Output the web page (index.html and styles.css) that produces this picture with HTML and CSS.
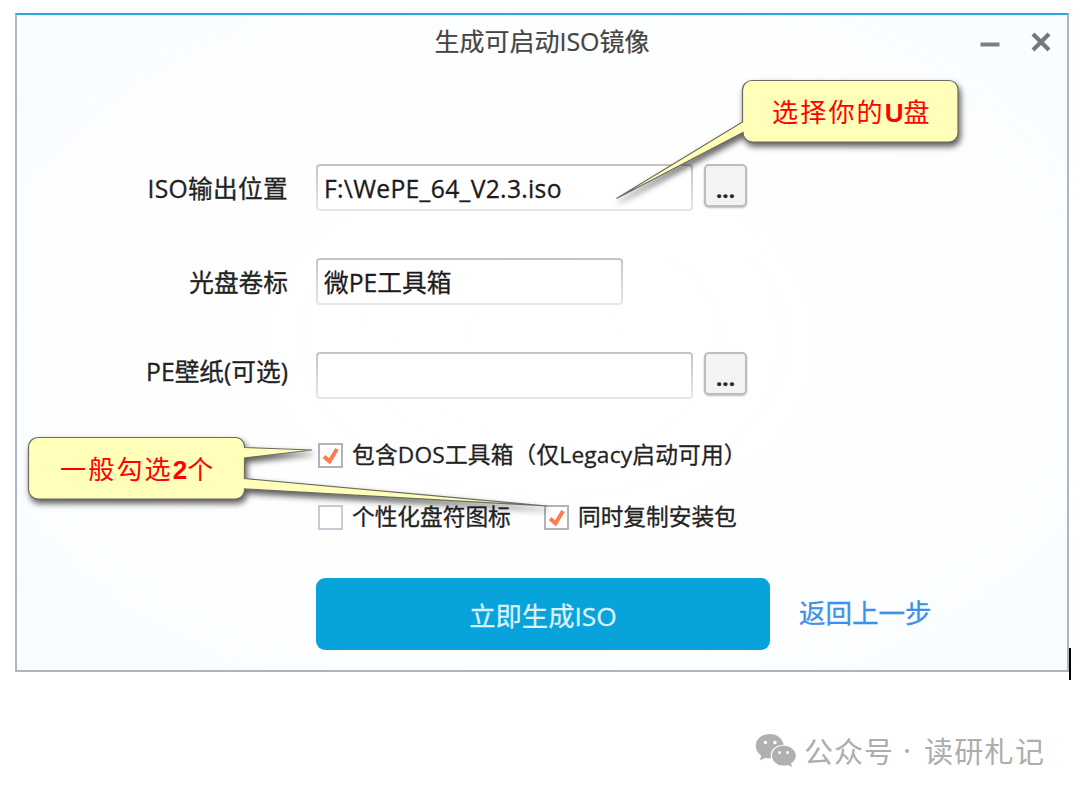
FILE: index.html
```
<!DOCTYPE html>
<html lang="zh-CN">
<head>
  <meta charset="UTF-8" />
  <title>生成可启动ISO镜像</title>
  <link rel="stylesheet" href="styles.css">
</head>
<body>
  <div class="window">
    <header class="titlebar">
      <h1>生成可启动ISO镜像</h1>
      <div class="window-btns">
        <svg width="20" height="22" viewBox="0 0 20 22"><path d="M0.5 13.5h19" stroke="#7e7e7e" stroke-width="4" /></svg>
        <svg width="20" height="22" viewBox="0 0 20 22"><path d="M2 3l16 16M18 3L2 19" stroke="#787878" stroke-width="4.2" /></svg>
      </div>
    </header>

    <form class="iso-form">
      <div class="row">
        <label class="name output-name" for="output">ISO输出位置</label>
        <input class="field wide output" id="output" type="text" value="F:\WePE_64_V2.3.iso" />
        <button class="browse" type="button">...</button>
      </div>
      <div class="row">
        <label class="name" for="volume">光盘卷标</label>
        <input class="field volume" id="volume" type="text" value="微PE工具箱" />
      </div>
      <div class="row wallpaper-row">
        <label class="name" for="wallpaper">PE壁纸(可选)</label>
        <input class="field wide" id="wallpaper" type="text" />
        <button class="browse" type="button">...</button>
      </div>

      <div class="options">
        <div class="option-row">
          <div class="option">
            <span class="box checked"><svg width="18" height="18" viewBox="0 0 18 18"><path d="M2 9.5L7.5 14.5L15 2" /></svg></span>
            <span class="legacy">包含DOS工具箱（仅Legacy启动可用）</span>
          </div>
        </div>
        <div class="option-row">
          <div class="option first">
            <span class="box"></span>
            <span>个性化盘符图标</span>
          </div>
          <div class="option">
            <span class="box checked"><svg width="18" height="18" viewBox="0 0 18 18"><path d="M2 9.5L7.5 14.5L15 2" /></svg></span>
            <span>同时复制安装包</span>
          </div>
        </div>
      </div>

      <div class="actions">
        <button class="make" type="button">立即生成ISO</button>
        <a class="back" href="#">返回上一步</a>
      </div>
    </form>
    <i class="caret"></i>
  </div>

  <footer class="account">
    <svg width="42" height="36" viewBox="0 0 42 36">
      <path fill="#b0b0b0" d="M15 1C6.800 1 .7 6.200.7 13c0 3.900 2 7.200 5.500 9.500L5 27.500l5.500-2.800c1.600.4 3 .6 4.700.6h1c-2.400-7.800 4.300-13.500 12.600-13.500C27.500 5.500 22 1 15 1z" />
      <path fill="#b0b0b0" d="M28.500 12.700C21.600 12.700 17 17.200 17 22.700c0 5.600 5 9.900 11.500 9.900 1.600 0 3-.3 4.300-.7l4.200 2.100-1-3.600c3-1.900 4.800-4.600 4.800-7.700 0-5.500-5.200-10-12.300-10z" />
      <g fill="#fff">
        <circle cx="10.500" cy="9.500" r="1.700" /><circle cx="20" cy="9.500" r="1.700" />
        <circle cx="24.500" cy="19.500" r="1.500" /><circle cx="32.500" cy="19.500" r="1.500" />
      </g>
    </svg>
    <span class="kind">公众号</span>
    <span class="dot"></span>
    <span class="account-name">读研札记</span>
  </footer>

  <!-- Callouts over the window -->
  <div class="callout usb">
    <svg width="366" height="144" viewBox="0 0 366 144">
      <path d="M152.500 10.500H349a9 9 0 0 1 9 9V63a9 9 0 0 1-9 9H152.500a9.500 9.500 0 0 1-9.500-9.500L16.500 128.500L142.500 52V20a9.500 9.500 0 0 1 10-9.500z" />
    </svg>
    <span class="callout-text">选择你的<b>U</b>盘</span>
  </div>
  <div class="callout pick">
    <svg width="550" height="100" viewBox="0 0 550 100">
      <path d="M18 7.500H216a9 9 0 0 1 8.500 9V17.500L292 20L224.500 28V48.500L527 76L224.500 59V60a9 9 0 0 1-9 9H18a9.500 9.500 0 0 1-9.500-9.500V17A9.500 9.500 0 0 1 18 7.500z" />
    </svg>
    <span class="callout-text">一般勾选<b>2</b>个</span>
  </div>
</body>
</html>
```

FILE: styles.css
```
* {
  box-sizing: border-box;
}
body {
  margin: 0;
  width: 1080px;
  height: 795px;
  padding: 13px 0 0 15px;
  overflow: hidden;
  position: relative;
  background: #fff;
  color: #222;
  font-family: "Open Sans", "Noto Sans CJK SC", sans-serif;
}
.window {
  position: relative;
  width: 1054px;
  height: 659px;
  border: 2px solid #adb6bc;
  border-top-color: #2ba7d9;
  background: radial-gradient(ellipse 62% 65% at 50% 50%, #fff 0%, #fefeff 65%, #f9fdff 100%);
}
.titlebar {
  height: 149px;
  position: relative;
}
.titlebar h1 {
  margin: 0;
  padding-top: 7px;
  font-size: 25px;
  line-height: 38px;
  font-weight: 400;
  text-align: center;
  color: #444;
  -webkit-text-stroke: 0.2px;
}
.window-btns {
  position: absolute;
  top: 16px;
  right: 16px;
  display: flex;
  gap: 31px;
}
.row {
  display: flex;
  align-items: flex-start;
  height: 94px;
}
.iso-form {
  -webkit-text-stroke: 0.3px;
}
.name {
  width: 271px;
  margin-right: 28px;
  padding-top: 6px;
  font-size: 24.700px;
  line-height: 38px;
  text-align: right;
}
.output-name {
  letter-spacing: 0.3px;
}
.wallpaper-row .name {
  padding-top: 1px;
}
.field {
  height: 47px;
  padding: 1px 6px 0;
  border: 2px solid transparent;
  border-radius: 4px;
  background: linear-gradient(#fff, #fff) padding-box, linear-gradient(#c4c4c4, #e7e7e7) border-box;
  color: #1c1c1c;
  font: 24.700px "Open Sans", "Noto Sans CJK SC", sans-serif;
  -webkit-text-stroke: 0.3px;
}
.output {
  letter-spacing: 0.3px;
}
.wide {
  width: 377px;
}
.volume {
  width: 307px;
  padding-top: 0;
  padding-bottom: 1px;
}
.browse {
  width: 43px;
  height: 43px;
  margin-left: 11px;
  padding: 7px 0 0;
  border: 2px solid #bdbdbd;
  border-radius: 5px;
  background: #f3f3f3;
  box-shadow: 0 1px 2px #bbb;
  color: #222;
  font: bold 22px/26px "Open Sans", sans-serif;
}
.options {
  margin: -9px 0 0 301px;
  font-size: 22.700px;
}
.option-row {
  display: flex;
  height: 62px;
}
.option {
  display: flex;
  align-items: flex-start;
  gap: 9px;
  line-height: 36px;
  white-space: nowrap;
}
.option.first {
  width: 226px;
}
.legacy {
  letter-spacing: 0.2px;
}
.box {
  width: 25px;
  height: 25px;
  margin-top: 6px;
  border: 2px solid #c5cbd2;
  background: #fff;
}
.box.checked {
  border-color: #adb4bb;
}
.box svg {
  display: block;
  margin: 2px 0 0 2px;
}
.box path {
  fill: none;
  stroke: #ff7a50;
  stroke-width: 4;
}
.actions {
  display: flex;
  margin: 17px 0 0 299px;
}
.make {
  width: 454px;
  height: 72px;
  padding: 0;
  border: 0;
  border-radius: 9px;
  background: #09a3dc;
  color: #dcf2fb;
  font: 26.300px "Open Sans", "Noto Sans CJK SC", sans-serif;
}
.back {
  margin: 16px 0 0 29px;
  color: #3c91ec;
  font-size: 26.500px;
  line-height: 38px;
  text-decoration: none;
}
.caret {
  position: absolute;
  right: -4px;
  bottom: -10px;
  width: 2px;
  height: 32px;
  background: #000;
}
.account {
  display: flex;
  align-items: center;
  margin: 58px 0 0 740px;
  height: 42px;
  color: #adadad;
  font: 29px/38px "Noto Sans CJK SC", sans-serif;
  letter-spacing: 1px;
  white-space: nowrap;
}
.account span {
  margin-bottom: 3px;
}
.account .kind {
  margin-left: 7px;
}
.account .dot {
  width: 4px;
  height: 4px;
  margin: 0 15px 0 11px;
  border-radius: 50%;
  background: #adadad;
}
.account .account-name {
  letter-spacing: 1.300px;
}

/* callouts */
.callout {
  position: absolute;
}
.callout svg {
  display: block;
  overflow: visible;
  filter: drop-shadow(2px 4px 3px rgba(0, 0, 0, 0.65));
}
.callout path {
  fill: #ffffb9;
  stroke: #6b6b60;
  stroke-width: 1.200;
}
.usb {
  left: 600px;
  top: 70px;
}
.pick {
  left: 20px;
  top: 430px;
}
.callout-text {
  position: absolute;
  color: #f00;
  font: 400 26px/40px "Noto Sans CJK SC", sans-serif;
  letter-spacing: 2.200px;
  white-space: nowrap;
}
.callout-text b {
  font: bold 26px "Liberation Sans", sans-serif;
  letter-spacing: 0;
}
.usb .callout-text {
  left: 172px;
  top: 21px;
}
.pick .callout-text {
  left: 40px;
  top: 18px;
}
```
